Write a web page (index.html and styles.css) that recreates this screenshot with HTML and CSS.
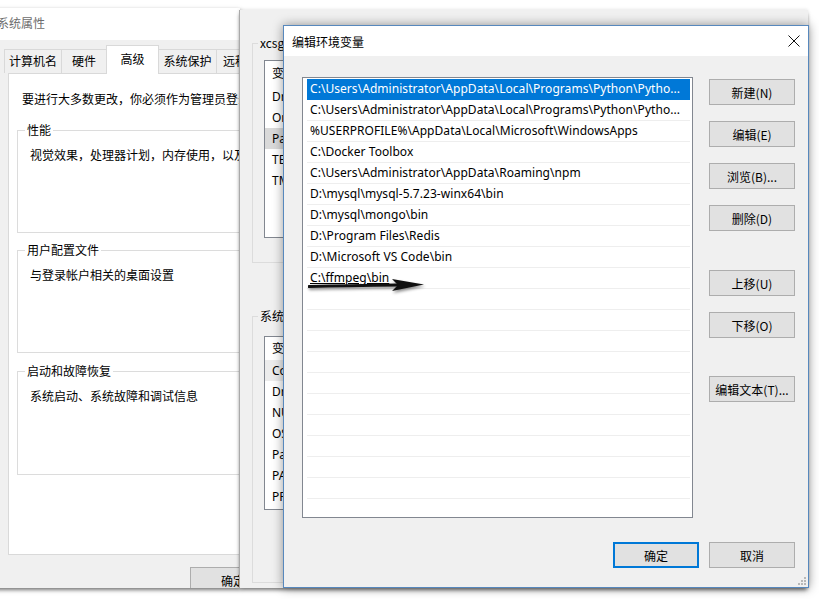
FILE: index.html
```html
<!DOCTYPE html>
<html lang="zh-CN">
<head>
<meta charset="utf-8">
<title>编辑环境变量</title>
<link rel="stylesheet" href="styles.css">
</head>
<body>
<div class="desktop">

  <section class="win-sys">
    <div class="sys-title">系统属性</div>
    <div class="tabs">
      <div class="tab t1">计算机名</div>
      <div class="tab t2">硬件</div>
      <div class="tab t3 active">高级</div>
      <div class="tab t4">系统保护</div>
      <div class="tab t5">远程</div>
    </div>
    <div class="sys-panel">
      <p class="intro">要进行大多数更改，你必须作为管理员登录。</p>
      <div class="grp g1">
        <div class="grp-label">性能</div>
        <p class="grp-text">视觉效果，处理器计划，内存使用，以及虚拟内存</p>
      </div>
      <div class="grp g2">
        <div class="grp-label">用户配置文件</div>
        <p class="grp-text">与登录帐户相关的桌面设置</p>
      </div>
      <div class="grp g3">
        <div class="grp-label">启动和故障恢复</div>
        <p class="grp-text">系统启动、系统故障和调试信息</p>
      </div>
    </div>
    <div class="sys-foot"><button class="btn sys-ok">确定</button></div>
  </section>

  <section class="win-env">
    <div class="env-grp eg1">
      <div class="grp-label">xcsg 的用户变量(U)</div>
      <div class="env-list el1">
        <div class="env-head h1">变量</div>
        <div class="env-row">DriverData</div>
        <div class="env-row">OneDrive</div>
        <div class="env-row inactive-sel">Path</div>
        <div class="env-row">TEMP</div>
        <div class="env-row">TMP</div>
      </div>
    </div>
    <div class="env-grp eg2">
      <div class="grp-label">系统变量(S)</div>
      <div class="env-list el2">
        <div class="env-head h2">变量</div>
        <div class="env-row hover">ComSpec</div>
        <div class="env-row">DriverData</div>
        <div class="env-row">NUMBER_OF_PROCESSORS</div>
        <div class="env-row">OS</div>
        <div class="env-row">Path</div>
        <div class="env-row">PATHEXT</div>
        <div class="env-row">PROCESSOR_ARCHITECTURE</div>
      </div>
    </div>
  </section>

  <section class="dlg">
    <div class="dlg-title">
      <span>编辑环境变量</span>
      <svg class="close" width="12" height="12" viewBox="0 0 12 12"><path d="M0.5 0.5 L11.5 11.5 M11.5 0.5 L0.5 11.5" stroke="#111" stroke-width="1" fill="none"/></svg>
    </div>
    <div class="dlg-body">
      <div class="path-list">
        <div class="path-row sel">C:\Users\Administrator\AppData\Local\Programs\Python\Pytho...</div>
        <div class="path-row">C:\Users\Administrator\AppData\Local\Programs\Python\Pytho...</div>
        <div class="path-row">%USERPROFILE%\AppData\Local\Microsoft\WindowsApps</div>
        <div class="path-row">C:\Docker Toolbox</div>
        <div class="path-row">C:\Users\Administrator\AppData\Roaming\npm</div>
        <div class="path-row">D:\mysql\mysql-5.7.23-winx64\bin</div>
        <div class="path-row">D:\mysql\mongo\bin</div>
        <div class="path-row">D:\Program Files\Redis</div>
        <div class="path-row">D:\Microsoft VS Code\bin</div>
        <div class="path-row under">C:\ffmpeg\bin</div>
        <div class="path-row"></div>
        <div class="path-row"></div>
        <div class="path-row"></div>
        <div class="path-row"></div>
        <div class="path-row"></div>
        <div class="path-row"></div>
        <div class="path-row"></div>
        <div class="path-row"></div>
        <div class="path-row"></div>
        <div class="path-row"></div>
        <div class="path-row"></div>
        <svg class="arrow" width="124" height="20" viewBox="0 0 124 20">
          <path d="M1 9.5 Q40 8.5 90 8" stroke="#111" stroke-width="3" fill="none" stroke-linecap="round"/>
          <path d="M84 2 L116 7.5 L84 14 L90 8 Z" fill="#111"/>
        </svg>
      </div>
      <div class="btn-col">
        <button class="btn">新建(N)</button>
        <button class="btn">编辑(E)</button>
        <button class="btn">浏览(B)...</button>
        <button class="btn">删除(D)</button>
        <button class="btn sep1">上移(U)</button>
        <button class="btn">下移(O)</button>
        <button class="btn sep2">编辑文本(T)...</button>
      </div>
    </div>
    <div class="dlg-foot">
      <button class="btn default">确定</button>
      <button class="btn">取消</button>
    </div>
    <svg class="grip" width="8" height="8" viewBox="0 0 8 8">
      <rect x="6" y="0" width="2" height="2" fill="#b8b8b8"/>
      <rect x="3" y="3" width="2" height="2" fill="#b8b8b8"/>
      <rect x="6" y="3" width="2" height="2" fill="#b8b8b8"/>
      <rect x="0" y="6" width="2" height="2" fill="#b8b8b8"/>
      <rect x="3" y="6" width="2" height="2" fill="#b8b8b8"/>
      <rect x="6" y="6" width="2" height="2" fill="#b8b8b8"/>
    </svg>
  </section>

</div>
</body>
</html>
```

FILE: styles.css
```css
* { box-sizing: border-box; }

body {
  margin: 0;
  background: #fff;
  font-family: "Noto Sans CJK SC", "Noto Sans", sans-serif;
  font-size: 12px;
  color: #000;
}

.desktop {
  position: relative;
  width: 819px;
  height: 599px;
  overflow: hidden;
  background: #fff;
}

/* ---------- System properties window ---------- */
.win-sys {
  position: absolute;
  left: -12px;
  top: 8px;
  width: 252px;
  height: 580px;
  background: #f0f0f0;
  box-shadow: 0 2px 4px rgba(0, 0, 0, 0.55);
  display: flex;
  flex-direction: column;
  overflow: hidden;
}

.sys-title {
  height: 32px;
  flex: none;
  background: #fff;
  padding-left: 9px;
  line-height: 30px;
  color: #6d6d6d;
  white-space: nowrap;
}

.tabs {
  height: 33px;
  flex: none;
  display: flex;
  align-items: flex-end;
  padding-left: 16px;
}

.tab {
  flex: none;
  height: 24px;
  line-height: 22px;
  text-align: center;
  white-space: nowrap;
  border-top: 1px solid #d9d9d9;
  border-right: 1px solid #d9d9d9;
  background: #f0f0f0;
}

.t1 { width: 58px; border-left: 1px solid #d9d9d9; }
.t2 { width: 45px; }
.t3 { width: 53px; }
.t4 { width: 58px; }
.t5 { width: 60px; padding-left: 6px; text-align: left; }

.tab.active {
  height: 29px;
  line-height: 26px;
  margin-bottom: -1px;
  background: #fff;
  border-left: 1px solid #d9d9d9;
  margin-left: -1px;
  position: relative;
  z-index: 1;
}

.sys-panel {
  flex: none;
  height: 482px;
  width: 300px;
  margin-left: 20px;
  background: #fff;
  border: 1px solid #d9d9d9;
  padding-top: 17px;
}

.intro {
  margin: 0 0 0 13px;
  line-height: 16px;
  white-space: nowrap;
}

.grp {
  margin-left: 8px;
  width: 290px;
  border: 1px solid #dcdcdc;
}

.g1 { margin-top: 23px; height: 103px; }
.g2 { margin-top: 17px; height: 103px; }
.g3 { margin-top: 18px; height: 104px; }

.grp-label {
  display: block;
  width: fit-content;
  margin: -9px 0 0 7px;
  padding: 0 2px;
  background: #fff;
  line-height: 16px;
  white-space: nowrap;
}

.grp-text {
  margin: 9px 0 0 12px;
  line-height: 16px;
  white-space: nowrap;
}

.sys-foot {
  flex: 1;
  padding: 12px 0 0 202px;
}

.sys-ok {
  width: 75px;
  height: 24px;
}

/* ---------- Environment variables window ---------- */
.win-env {
  position: absolute;
  left: 239px;
  top: 10px;
  width: 569px;
  height: 578px;
  background: #f0f0f0;
  border-left: 1px solid #a9a9a9;
  box-shadow: 0 3px 4px -1px rgba(0, 0, 0, 0.55), 0 -1px 3px rgba(0, 0, 0, 0.08);
  padding-top: 33px;
}

.env-grp {
  margin-left: 12px;
  width: 300px;
  border: 1px solid #dcdcdc;
}

.eg1 { height: 220px; }
.eg2 { margin-top: 53px; height: 267px; }

.env-grp .grp-label {
  background: #f0f0f0;
  margin-left: 5px;
}

.env-list {
  margin-left: 11px;
  width: 270px;
  background: #fff;
  border: 1px solid #828790;
  overflow: hidden;
  font-family: "Noto Sans", "Noto Sans CJK SC", sans-serif;
}

.el1 { margin-top: 9px; height: 178px; }
.el2 { margin-top: 12px; height: 174px; }

.env-head {
  padding-left: 7px;
  font-family: "Noto Sans CJK SC", sans-serif;
}
.h1 { height: 25px; line-height: 24px; }
.h2 { height: 23px; line-height: 22px; }

.env-row {
  height: 21px;
  line-height: 21px;
  padding-left: 7px;
  white-space: nowrap;
}

.env-row.inactive-sel { background: #d9d9d9; }
.env-row.hover { background: #ececec; }

/* ---------- Edit dialog ---------- */
.dlg {
  position: absolute;
  left: 283px;
  top: 25px;
  width: 526px;
  height: 563px;
  background: #f0f0f0;
  border: 1px solid #5788bd;
  box-shadow: 0 0 10px rgba(0, 0, 0, 0.4);
  display: flex;
  flex-direction: column;
}

.dlg-title {
  height: 30px;
  flex: none;
  background: #fff;
  display: flex;
  align-items: center;
  justify-content: space-between;
  padding: 0 8px 0 8px;
}

.close { display: block; }

.dlg-body {
  display: flex;
  padding: 21px 13px 0 18px;
}

.path-list {
  position: relative;
  width: 391px;
  height: 441px;
  flex: none;
  background: #fff;
  border: 1px solid #828790;
  padding: 1px 2px 0 4px;
  overflow: hidden;
}

.path-row {
  height: 21px;
  line-height: 20px;
  border-bottom: 1px solid #eeeeee;
  padding-left: 3px;
  white-space: nowrap;
  overflow: hidden;
  font-family: "Noto Sans", "Noto Sans CJK SC", sans-serif;
  font-size: 12px;
  letter-spacing: 0.05px;
}

.path-row.sel {
  background: #0078d7;
  color: #fff;
  border-bottom-color: #0078d7;
}

.path-row.under { text-decoration: underline; text-underline-offset: 1px; }

.arrow {
  position: absolute;
  left: 5px;
  top: 199px;
  filter: drop-shadow(1px 2px 1.5px rgba(0, 0, 0, 0.45));
}

.btn-col {
  margin-left: 16px;
  padding-top: 2px;
  display: flex;
  flex-direction: column;
  gap: 16px;
}

.btn {
  width: 86px;
  height: 26px;
  padding: 0;
  background: #e1e1e1;
  border: 1px solid #adadad;
  font-family: "Noto Sans CJK SC", "Noto Sans", sans-serif;
  font-size: 12px;
  color: #000;
  white-space: nowrap;
}

.btn-col .sep1 { margin-top: 23px; }
.btn-col .sep2 { margin-top: 22px; }

.dlg-foot {
  margin-top: 24px;
  display: flex;
  justify-content: flex-end;
  gap: 10px;
  padding-right: 13px;
}

.btn.default {
  border-color: #0078d7;
  box-shadow: inset 0 0 0 1px #0078d7;
}

.grip {
  position: absolute;
  right: 2px;
  bottom: 2px;
}
```
